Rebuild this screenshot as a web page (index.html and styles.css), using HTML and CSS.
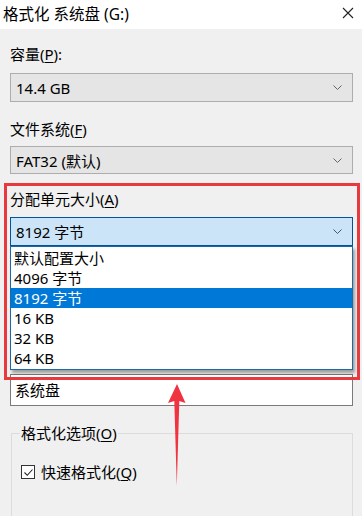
FILE: index.html
```html
<!DOCTYPE html>
<html lang="zh-CN">
<head>
    <meta charset="UTF-8">
    <meta name="viewport" content="width=device-width, initial-scale=1.0">
    <title>格式化 系统盘 (G:)</title>
    <link rel="stylesheet" href="styles.css">
</head>
<body>
    <div class="dialog">
        <!-- Title bar -->
        <div class="titlebar">
            <span class="title">格式化 系统盘 (G:)</span>
            <svg class="close" width="12" height="12" viewBox="0 0 12 12">
                <path d="M1 1 L11 11 M11 1 L1 11" stroke="#222" stroke-width="1.1" fill="none"/>
            </svg>
        </div>

        <div class="content">
            <div class="label label-capacity">容量(<u>P</u>):</div>
            <div class="combo">
                <span>14.4 GB</span>
                <svg class="chevron" width="9" height="5" viewBox="0 0 9 5"><path d="M0.5 0.5 L4.5 4.5 L8.5 0.5" stroke="#666" fill="none"/></svg>
            </div>

            <div class="label label-fs">文件系统(<u>F</u>)</div>
            <div class="combo combo-short">
                <span>FAT32 (默认)</span>
                <svg class="chevron" width="9" height="5" viewBox="0 0 9 5"><path d="M0.5 0.5 L4.5 4.5 L8.5 0.5" stroke="#666" fill="none"/></svg>
            </div>

            <div class="label label-alloc">分配单元大小(<u>A</u>)</div>
            <div class="combo-wrap">
                <div class="combo combo-open">
                    <span>8192 字节</span>
                    <svg class="chevron" width="9" height="5" viewBox="0 0 9 5"><path d="M0.5 0.5 L4.5 4.5 L8.5 0.5" stroke="#3a5a7a" fill="none"/></svg>
                </div>
                <!-- Open dropdown list -->
                <ul class="dropdown">
                    <li>默认配置大小</li>
                    <li>4096 字节</li>
                    <li class="selected">8192 字节</li>
                    <li>16 KB</li>
                    <li>32 KB</li>
                    <li>64 KB</li>
                </ul>
            </div>

            <div class="textbox">系统盘</div>

            <fieldset class="options">
                <legend>格式化选项(<u>O</u>)</legend>
                <div class="check">
                    <span class="box">
                        <svg width="11" height="11" viewBox="0 0 11 11"><path d="M1.5 5.5 L4.3 8.3 L9.5 2.5" stroke="#222" stroke-width="1.1" fill="none"/></svg>
                    </span>
                    <span>快速格式化(<u>Q</u>)</span>
                </div>
            </fieldset>
        </div>

        <!-- Annotation -->
        <div class="highlight"></div>
        <svg class="arrow" width="20" height="104" viewBox="0 0 20 104">
            <path d="M10 0 L18.5 19 L12.3 17 L9.8 102 L7.3 17 L1 19 Z" fill="#ef3340"/>
        </svg>
    </div>
</body>
</html>
```

FILE: styles.css
```css
* {
    box-sizing: border-box;
}
body {
    margin: 0;
    padding: 0;
    background-color: #f0f0f0;
    font-family: "Noto Sans", "Noto Sans CJK SC", sans-serif;
    font-size: 15px;
    color: #000;
    overflow: hidden;
}
u {
    text-decoration-thickness: 1px;
    text-underline-offset: 2px;
}
.dialog {
    position: relative;
    width: 362px;
    height: 516px;
    overflow: hidden;
}

/* Title bar */
.titlebar {
    height: 29px;
    background-color: #fff;
    display: flex;
    align-items: center;
    justify-content: space-between;
    padding: 0 8px 0 3px;
}
.title {
    font-size: 15.5px;
    line-height: 20px;
    margin-top: -2px;
}
.close {
    margin-top: -4px;
}

/* Form */
.content {
    padding: 0 9px 0 10px;
}
.label {
    line-height: 20px;
}
.label-capacity {
    margin-top: 15px;
    margin-bottom: 9px;
}
.label-fs {
    margin-top: 17px;
    margin-bottom: 7px;
}
.label-alloc {
    margin-top: 15px;
    margin-bottom: 8px;
}
.combo {
    height: 29px;
    background-color: #e5e5e5;
    border: 1px solid #adadad;
    display: flex;
    align-items: center;
    justify-content: space-between;
    padding: 0 10px 0 5px;
}
.combo-short {
    height: 28px;
}
.combo-open {
    background-color: #cce4f7;
    border-color: #005499;
}
.combo-wrap {
    position: relative;
}
.dropdown {
    position: absolute;
    top: 29px;
    left: 0;
    right: 0;
    margin: 0;
    padding: 1px 0;
    list-style: none;
    background-color: #fff;
    border: 1px solid #1c6aa5;
    box-shadow: 2px 3px 3px rgba(0, 0, 0, 0.35);
    z-index: 2;
}
.dropdown li {
    height: 20px;
    line-height: 20px;
    padding-left: 3px;
}
.dropdown li.selected {
    background-color: #0078d7;
    color: #fff;
}
.textbox {
    margin-top: 128px;
    height: 32px;
    background-color: #fff;
    border: 1px solid #7a7a7a;
    padding: 3px 4px;
    line-height: 24px;
}

/* Options group */
.options {
    margin: 17px 0 0 1px;
    padding: 0 0 60px 9px;
    border: 1px solid #dcdcdc;
}
.options legend {
    padding: 0 1px;
    margin-left: -1px;
    line-height: 20px;
}
.check {
    display: flex;
    align-items: center;
    gap: 6px;
    margin-top: 19px;
    line-height: 20px;
}
.box {
    width: 14px;
    height: 14px;
    background-color: #fff;
    border: 1px solid #333;
    display: flex;
    align-items: center;
    justify-content: center;
}

/* Annotation */
.highlight {
    position: absolute;
    left: 4px;
    top: 183px;
    width: 356px;
    height: 197px;
    border: 3px solid #e8393f;
    z-index: 3;
}
.arrow {
    position: absolute;
    left: 167px;
    top: 384px;
    z-index: 3;
}
```
